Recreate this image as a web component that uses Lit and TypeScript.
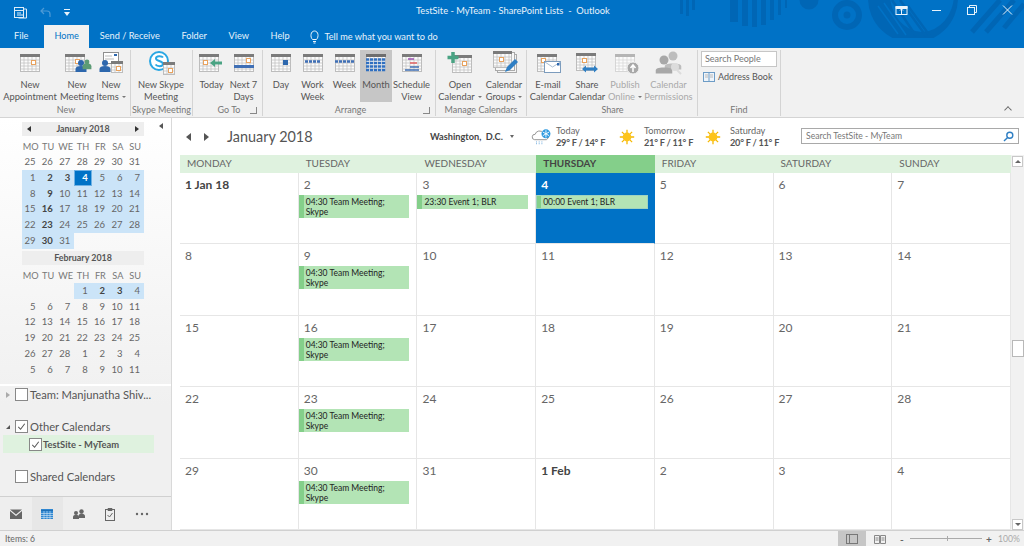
import { LitElement, html, css, svg } from "lit";
import { customElement } from "lit/decorators.js";

const F = "#fbfbfb";
const calGrid = (x: number, y: number, w = 20, h = 18, bar = "#7b7b7b", line = "#bdbdbd") => {
  const lines: any[] = [];
  for (let i = x + 4; i < x + w; i += 4) lines.push(svg`<path d="M${i} ${y + 3}V${y + h}" stroke=${line} stroke-width=".7"/>`);
  for (let j = y + 6; j < y + h; j += 3) lines.push(svg`<path d="M${x} ${j}H${x + w}" stroke=${line} stroke-width=".7"/>`);
  return svg`<rect x=${x + 0.5} y=${y + 0.5} width=${w - 1} height=${h - 1} fill=${F} stroke=${line}/>${lines}<rect x=${x} y=${y} width=${w} height="3" fill=${bar}/>`;
};
const orange = (x: number, y: number, s = 4) => svg`<rect x=${x + 0.5} y=${y + 0.5} width=${s} height=${s} fill="#fff" stroke="#e8a25e"/>`;
const person = (x: number, y: number, c: string, s = 1) => svg`<circle cx=${x} cy=${y} r=${3 * s} fill=${c}/><path d="M${x - 5.5 * s} ${y + 9 * s}v-3c0-2 2-3 ${5.5 * s}-3s${5.5 * s} 1 ${5.5 * s} 3v3z" fill=${c}/>`;
const blueRow = (x: number, y: number, w: number) => svg`<rect x=${x} y=${y} width=${w} height="3" fill="#3f6fb5"/>`;

const ICONS: Record<string, any> = {
  appt: svg`${calGrid(6, 3)}${orange(17, 9)}`,
  meeting: svg`${calGrid(4, 3)}${orange(14, 8)}${person(20, 12, "#2d67ad")}${person(26, 11, "#5c9b75", 0.8)}`,
  items: svg`<rect x="8.5" y="1.5" width="15" height="11" fill="#fff" stroke="#8f8f8f"/><path d="M10 5h7M10 8h9" stroke="#bbb"/><rect x="19" y="3" width="3" height="2" fill="#2d67ad"/>${calGrid(16, 10, 12, 12)}${orange(21, 15)}${person(10, 12, "#2d67ad")}`,
  skype: svg`<circle cx="14" cy="10" r="9" fill="#fff" stroke="#2aa7e3" stroke-width="2"/><path d="M18 6.500c-1-1.500-7-2-7 1 0 3 7 2 7 5.500 0 3-6 2.500-7.500 .5" fill="none" stroke="#2aa7e3" stroke-width="2"/>${calGrid(18, 11, 12, 13)}${orange(23, 17)}`,
  today: svg`${calGrid(3, 3)}${orange(7, 9)}<path d="M14 12l5-4v2.500h7v3h-7V16z" fill="#4aa383"/>`,
  next7: svg`${calGrid(6, 3)}${orange(18, 7)}${blueRow(6, 14, 20)}`,
  day: svg`${calGrid(6, 3)}<rect x="18" y="9" width="5" height="5" fill="#2d67ad"/>`,
  work: svg`${calGrid(6, 3)}<path d="M8 10.500h16" stroke="#3f6fb5" stroke-width="2.500" stroke-dasharray="3 1"/>`,
  week: svg`${calGrid(6, 3)}<path d="M6 10.500h20" stroke="#3f6fb5" stroke-width="2.500" stroke-dasharray="3 1"/>`,
  month: svg`${calGrid(6, 3, 20, 18, "#6e6e6e", "#c6c6c6")}<path d="M6 8.500h20M6 12h20M6 15.500h20M6 19h20" stroke="#2f6fc0" stroke-width="2.600" stroke-dasharray="3.200 .8"/>`,
  schedule: svg`${calGrid(6, 3)}<path d="M12 8h6" stroke="#9a4fb0" stroke-width="1.500"/><path d="M14 12h7" stroke="#e06060" stroke-width="1.500"/><path d="M14 16h9" stroke="#3f6fb5" stroke-width="1.500"/><path d="M9 19h14" stroke="#3f6fb5" stroke-width="1.500"/>`,
  open: svg`${calGrid(8, 4)}${orange(18, 10)}<path d="M9 1v11M3.500 6.500h11" stroke="#4aa383" stroke-width="3.500"/>`,
  groups: svg`<rect x="9.500" y="3.500" width="19" height="18" fill="#f4f4f4" stroke="#aaa"/><rect x="7.500" y="1.500" width="19" height="18" fill="#f8f8f8" stroke="#aaa"/>${calGrid(5, 0, 19, 17)}${orange(11, 6)}<path d="M17 21l2-5 8-8 3 3-8 8z" fill="#2f7fc4"/>`,
  email: svg`${calGrid(5, 3)}${orange(9, 7)}<rect x="12.500" y="10.500" width="16" height="11" fill="#fff" stroke="#7c9cbd"/><path d="M13 11l7.500 5 8-5" fill="none" stroke="#a8bdd2"/><rect x="25" y="12" width="2.500" height="2.500" fill="#2d67ad"/>`,
  share: svg`${calGrid(5, 2)}${orange(11, 7)}<path d="M8 18l4-3.500v2h8v-2l4 3.500-4 3.500v-2h-8v2z" fill="#2f7fc4" transform="translate(3 0)"/>`,
  publish: svg`${calGrid(6, 3, 20, 18, "#b5b5b5", "#d6d6d6")}<circle cx="24" cy="17" r="6" fill="#a8a8a8" stroke="#f1f1f1"/><path d="M24 21v-6M21.500 17l2.500-3 2.500 3" fill="none" stroke="#fff" stroke-width="1.500"/>`,
  perm: svg`${person(20, 5, "#bdbdbd", 1.5)}${person(11, 9, "#a8a8a8", 1.500)}<circle cx="22" cy="16" r="4" fill="#dcdcdc"/><path d="M24 19l4 4" stroke="#dcdcdc" stroke-width="2"/>`,
};

type Item = { icon: string; l: string[]; w: number; caret?: boolean; dim?: boolean; on?: boolean };
type Group = { label: string; w: number; launcher?: boolean; pad: number; items: Item[] };
const GROUPS: Group[] = [
  { label: "New", w: 131, pad: 2, items: [
    { icon: "appt", l: ["New", "Appointment"], w: 56 },
    { icon: "meeting", l: ["New", "Meeting"], w: 38 },
    { icon: "items", l: ["New", "Items"], caret: true, w: 30 },
  ] },
  { label: "Skype Meeting", w: 62, pad: 0, items: [{ icon: "skype", l: ["New Skype", "Meeting"], w: 60 }] },
  { label: "Go To", w: 70, pad: 3, launcher: true, items: [
    { icon: "today", l: ["Today"], w: 31 },
    { icon: "next7", l: ["Next 7", "Days"], w: 33 },
  ] },
  { label: "Arrange", w: 173, pad: 3, launcher: true, items: [
    { icon: "day", l: ["Day"], w: 30 },
    { icon: "work", l: ["Work", "Week"], w: 33 },
    { icon: "week", l: ["Week"], w: 31 },
    { icon: "month", l: ["Month"], w: 32, on: true },
    { icon: "schedule", l: ["Schedule", "View"], w: 39 },
  ] },
  { label: "Manage Calendars", w: 91, pad: 0, items: [
    { icon: "open", l: ["Open", "Calendar"], caret: true, w: 48 },
    { icon: "groups", l: ["Calendar", "Groups"], caret: true, w: 40 },
  ] },
  { label: "Share", w: 171, pad: 1, items: [
    { icon: "email", l: ["E-mail", "Calendar"], w: 40 },
    { icon: "share", l: ["Share", "Calendar"], w: 38 },
    { icon: "publish", l: ["Publish", "Online"], caret: true, dim: true, w: 38 },
    { icon: "perm", l: ["Calendar", "Permissions"], dim: true, w: 49 },
  ] },
];

const TABS = ["File", "Home", "Send / Receive", "Folder", "View", "Help"];
const DAYS = ["MONDAY", "TUESDAY", "WEDNESDAY", "THURSDAY", "FRIDAY", "SATURDAY", "SUNDAY"];
const CELLS = ["1 Jan 18", 2, 3, 4, 5, 6, 7, 8, 9, 10, 11, 12, 13, 14, 15, 16, 17, 18, 19, 20, 21, 22, 23, 24, 25, 26, 27, 28, 29, 30, 31, "1 Feb", 2, 3, 4];
const MEET = "04:30 Team Meeting; Skype";
const EVENTS: Record<number, { t: string; cls: string }> = {
  1: { t: MEET, cls: "two" }, 8: { t: MEET, cls: "two" }, 15: { t: MEET, cls: "two" }, 22: { t: MEET, cls: "two" }, 29: { t: MEET, cls: "two" },
  2: { t: "23:30 Event 1; BLR", cls: "one" }, 3: { t: "00:00 Event 1; BLR", cls: "one sel" },
};
const WD = ["MO", "TU", "WE", "TH", "FR", "SA", "SU"];
const JAN: any[] = [25, 26, 27, 28, 29, 30, 31, 1, 2, 3, 4, 5, 6, 7, 8, 9, 10, 11, 12, 13, 14, 15, 16, 17, 18, 19, 20, 21, 22, 23, 24, 25, 26, 27, 28, 29, 30, 31];
const FEB: any[] = ["", "", "", 1, 2, 3, 4, 5, 6, 7, 8, 9, 10, 11, 12, 13, 14, 15, 16, 17, 18, 19, 20, 21, 22, 23, 24, 25, 26, 27, 28, 1, 2, 3, 4, 5, 6, 7, 8, 9, 10, 11];
const BOLD = [2, 3, 9, 16, 23, 30];

const sun = svg`<svg class="wx" viewBox="0 0 20 20"><g stroke="#f5b800" stroke-width="1.600"><path d="M10 1v18M1 10h18M3.600 3.600l12.800 12.800M16.400 3.600L3.600 16.400"/></g><circle cx="10" cy="10" r="5.500" fill="#fdc41c"/></svg>`;
const snow = svg`<svg class="wx wide" viewBox="0 0 24 20"><path d="M5 13a3 3 0 0 1 .5-6 5 5 0 0 1 9-1.500A3.500 3.500 0 0 1 18 13z" fill="#fff" stroke="#8a8a8a"/><path d="M7 15v4M10 15v4M13 15v4" stroke="#5a9fd8" stroke-dasharray="1 1"/><circle cx="17.500" cy="6.500" r="5" fill="#2f9ae0"/><path d="M17.500 2.500v8M14 4.500l7 4M14 8.500l7-4" stroke="#fff"/></svg>`;
const check = html`<svg class="tick" viewBox="0 0 12 12"><path d="M2.500 6.500l2.500 2.500 4.500-6" fill="none" stroke="#555" stroke-width="1.100"/></svg>`;

@customElement("app-root")
export class AppRoot extends LitElement {
  static styles = css`
    :host { display: block; width: 1024px; height: 546px; overflow: hidden; font-family: Lato, "Open Sans", sans-serif; color: #444; background: #fff; position: relative; }
    svg { display: block; }
    .top { background: #0072c6; height: 48px; color: #fff; position: relative; overflow: hidden; }
    .deco { position: absolute; right: 0; top: 0; width: 384px; height: 48px; }
    .title { height: 24px; display: flex; align-items: center; position: relative; }
    .qat { display: flex; align-items: center; gap: 13px; padding-left: 14px; width: 60px; }
    .ttl { position: absolute; left: 416px; top: 4px; font-size: 9.300px; white-space: pre; line-height: 14px; color: #e8f3fb; }
    .win { position: absolute; top: 3px; right: 0; display: flex; }
    .win svg { width: 14px; height: 14px; margin: 0 10px 0 11px; }
    .tabs { height: 24px; display: flex; align-items: flex-end; font-size: 9.200px; position: relative; }
    .tab { padding: 0 10.800px; height: 23px; line-height: 22px; color: #e8f3fb; }
    .tab.first { padding: 0 16px 0 14px; }
    .tab.on { background: #f1f1f1; color: #0072c6; padding: 0 10px; height: 23px; }
    .tell { display: flex; align-items: center; gap: 4px; height: 23px; margin-left: 9px; color: #e8f3fb; }
    .tell svg { width: 11px; height: 14px; }
    .ribbon { height: 70px; background: #f1f1f1; border-bottom: 1px solid #d4d4d4; box-sizing: border-box; display: flex; position: relative; font-size: 9.300px; color: #555; }
    .grp { box-sizing: border-box; height: 66px; margin-top: 2px; border-right: 1px solid #d4d4d4; display: flex; flex-direction: column; position: relative; flex: none; }
    .items { display: flex; flex: 1; }
    .item { display: flex; flex-direction: column; align-items: center; height: 52px; flex: none; line-height: 12px; white-space: nowrap; }
    .item svg.ic { width: 32px; height: 24px; flex: none; margin-top: 1px; margin-bottom: 4px; }
    .item.on { background: #c6c6c6; }
    .item.dim { color: #a9a9a9; }
    .lbl { text-align: center; color: #777; font-size: 9px; line-height: 12px; height: 12px; white-space: nowrap; }
    .caret { display: inline-block; border: 2px solid transparent; border-top: 2.500px solid #777; border-bottom: 0; margin: 0 0 2px 3px; }
    .launch { position: absolute; right: 5px; bottom: 2px; width: 6px; height: 6px; border-right: 1px solid #888; border-bottom: 1px solid #888; }
    .find { width: 83px; padding: 1px 3px 0; }
    .sp { box-sizing: border-box; width: 76px; height: 16px; background: #fff; border: 1px solid #c6c6c6; padding-left: 3px; font-size: 9px; line-height: 13px; color: #777; }
    .ab { display: flex; align-items: center; gap: 3px; margin: 2px 0 0 2px; height: 15px; color: #555; font-size: 9px; white-space: nowrap; }
    .ab svg { width: 12px; height: 10px; }
    .collapse { position: absolute; right: 13px; bottom: 4px; width: 5px; height: 5px; border-left: 1.500px solid #666; border-top: 1.500px solid #666; transform: rotate(45deg) scale(.9); }
    .main { display: flex; height: 412px; }
    .side { width: 172px; box-sizing: border-box; flex: none; border-right: 1px solid #d9d9d9; background: linear-gradient(#fff, #f0f0f0 70%); display: flex; flex-direction: column; position: relative; }
    .sidecol { position: absolute; left: 159px; top: 5px; width: 0; height: 0; border: 3px solid transparent; border-right: 4px solid #555; border-left: 0; }
    .minis { padding: 4px 0 0 22px; width: 122px; height: 262px; flex: none; font-size: 9.500px; }
    .mh { height: 14px; background: #eeeeee; font-weight: 700; text-align: center; line-height: 14px; color: #555; display: flex; justify-content: space-between; align-items: center; padding: 0 5px; font-size: 8.900px; }
    .mh i { width: 0; height: 0; border: 3px solid transparent; }
    .mh i.l { border-right: 4px solid #333; border-left: 0; }
    .mh i.r { border-left: 4px solid #333; border-right: 0; }
    .mh i.n { border: 0; }
    .mg { display: grid; grid-template-columns: repeat(7, 17.430px); grid-template-rows: 18px; grid-auto-rows: 15.800px; color: #666; }
    .wd { text-align: center; line-height: 15px; color: #777; height: 18px; padding-top: 3px; box-sizing: border-box; font-size: 9.200px; }
    .wdrow { height: 18px; grid-column: 1 / 8; display: grid; grid-template-columns: repeat(7, 17.430px); }
    .d { text-align: right; padding-right: 4px; line-height: 15.800px; box-sizing: border-box; }
    .d.hl { background: #cbe4f8; }
    .d.b { font-weight: 700; color: #444; }
    .d.t { background: #0072c6; color: #fff; font-weight: 700; box-shadow: inset 0 0 0 1px #6fb1e4; }
    .feb { margin-top: 2px; }
    .tree { flex: 1; border-top: 2px solid #fff; font-size: 11.200px; color: #555; }
    .row { display: flex; align-items: center; height: 17px; white-space: nowrap; }
    .r2 { margin-top: 15px; }
    .r3 { margin: 0 17px 0 3px; background: #dff2df; font-size: 9.400px; font-weight: 700; padding-left: 26px; box-sizing: border-box; height: 18px; }
    .r3 .box { margin-right: 1px; }
    .r4 { margin-top: 15px; padding-left: 15px; }
    .tri { width: 15px; display: flex; justify-content: center; flex: none; }
    .tri i { width: 0; height: 0; border: 3px solid transparent; border-left: 4px solid #aaa; border-right: 0; }
    .tri i.dn { border: 0; border-bottom: 4px solid #555; border-left: 4px solid transparent; }
    .box { width: 11px; height: 11px; border: 1px solid #888; background: #fff; margin-right: 2px; flex: none; }
    .tick { width: 11px; height: 11px; }
    .nav { height: 33px; border-top: 1px solid #d0d0d0; background: #eeeeee; display: flex; flex: none; }
    .nb { width: 31.500px; display: flex; align-items: center; justify-content: center; }
    .nb svg { width: 14px; height: 14px; }
    .nb.on { background: #e7e7e7; }
    .cal { flex: 1; min-width: 0; }
    .chead { height: 37px; display: flex; align-items: center; position: relative; background: #fff; }
    .ar { width: 0; height: 0; border: 4px solid transparent; flex: none; }
    .ar.l { border-right: 5px solid #555; border-left: 0; margin-left: 14px; }
    .ar.r { border-left: 5px solid #555; border-right: 0; margin-left: 13px; }
    .month { font-size: 14.400px; color: #555; margin-left: 18px; width: 203px; white-space: nowrap; }
    .loc { font-size: 9.200px; font-weight: 700; color: #444; width: 80px; white-space: nowrap; }
    .dd { width: 0; height: 0; border: 2px solid transparent; border-top: 3px solid #666; border-bottom: 0; margin-right: 16px; }
    .wx { width: 16px; height: 16px; flex: none; margin-right: 9px; }
    .wx.wide { width: 22px; height: 18px; margin-right: 4px; }
    .wxb { display: flex; align-items: center; font-size: 9.200px; line-height: 12px; color: #666; flex: none; }
    .wxb b { font-weight: 700; color: #555; display: block; white-space: nowrap; letter-spacing: -.25px; }
    .w1 { width: 89px; }
    .w2 { width: 86px; }
    .w3 { width: 86px; }
    .search { position: absolute; left: 629px; top: 10px; width: 218px; height: 16px; box-sizing: border-box; border: 1px solid #a9a9a9; font-size: 8.600px; line-height: 14px; padding: 0 4px; color: #777; display: flex; justify-content: space-between; align-items: center; }
    .search svg { width: 11px; height: 11px; }
    .body { display: flex; height: 375px; padding-left: 8px; }
    .gridwrap { width: 831px; flex: none; }
    .dow { display: grid; grid-template-columns: repeat(7, 1fr); height: 18px; background: #dff2df; font-size: 10px; color: #666; }
    .dow div { padding-left: 7px; line-height: 16px; }
    .dow .now { background: #84cf8a; font-weight: 700; color: #444; }
    .grid { display: grid; grid-template-columns: repeat(7, 1fr); grid-template-rows: 71px repeat(4, 71.500px); }
    .cell { box-sizing: border-box; border-right: 1px solid #e6e6e6; border-bottom: 1px solid #e6e6e6; padding: 4px 0 0 0; font-size: 12px; color: #666; line-height: 16px; }
    .cell .n { padding-left: 5px; height: 18px; }
    .cell .bd { font-weight: 700; color: #444; font-size: 12px; }
    .cell.now { background: #0072c6; border-right-color: #0072c6; color: #fff; }
    .cell.now .n { font-weight: 700; }
    .ev { box-sizing: border-box; margin-right: 7px; background: #b3e4b5; border-left: 5px solid #84cf8a; font-size: 8.500px; line-height: 10px; color: #222; padding: 2px 2px 1px 2px; }
    .ev.two { height: 23px; }
    .ev.one { height: 14px; white-space: nowrap; }
    .ev.sel { outline: 1px solid #9fd3c0; outline-offset: -1px; margin-right: 6px; }
    .sb { flex: 1; background: #f1f1f1; display: flex; flex-direction: column; align-items: center; padding-top: 1px; box-sizing: border-box; }
    .sbb { width: 11px; height: 11px; box-sizing: border-box; background: #fff; border: 1px solid #c8c8c8; display: flex; align-items: center; justify-content: center; flex: none; }
    .sbb i { width: 0; height: 0; border: 3px solid transparent; border-top: 0; border-bottom: 3px solid #666; }
    .sbb i.down { border-bottom: 0; border-top: 3px solid #666; }
    .thumb { width: 12px; height: 17px; background: #fff; border: 1px solid #b8b8b8; box-sizing: border-box; margin-top: 173px; flex: none; }
    .sbsp { flex: 1; }
    .status { height: 16px; background: #f1f1f1; border-top: 1px solid #d0d0d0; box-sizing: border-box; display: flex; align-items: center; font-size: 8.600px; color: #666; position: relative; }
    .items6 { padding-left: 5px; width: 833px; flex: none; }
    .vw { width: 28px; height: 15px; display: flex; align-items: center; justify-content: center; flex: none; }
    .vw.on { background: #c6c6c6; }
    .vw svg { width: 12px; height: 10px; }
    .zoom { display: flex; align-items: center; margin-left: 6px; width: 92px; }
    .zoom i { font-style: normal; font-weight: 700; font-size: 10px; color: #666; width: 6px; line-height: 10px; }
    .zoom u { display: block; flex: 1; height: 1px; background: #aaa; margin: 0 4px; position: relative; }
    .zoom u::after { content: ""; position: absolute; left: 37px; top: -2px; width: 1px; height: 5px; background: #aaa; }
    .pct { color: #a9a9a9; margin-left: 6px; }
  `;

  private mini(list: any[], hlFrom: number, hlTo: number, today = -1) {
    return html`<div class="mg">
      <div class="wdrow">${WD.map((w) => html`<div class="wd">${w}</div>`)}</div>
      ${list.map((d, i) => {
        const hl = i >= hlFrom && i <= hlTo;
        const cls = ["d", hl ? "hl" : "", hl && BOLD.includes(d) ? "b" : "", i === today ? "t" : ""].join(" ");
        return html`<div class=${cls}>${d}</div>`;
      })}
    </div>`;
  }

  render() {
    return html`
      <div class="top">
        <svg class="deco" viewBox="640 0 384 48" fill="#0066b5">
          <defs><clipPath id="bigclip"><rect x="860" y="0" width="110" height="38"/></clipPath></defs>
          <g><rect x="680" y="0" width="3" height="14"/><rect x="686" y="0" width="3" height="16"/><rect x="692" y="0" width="3" height="10"/>
          <rect x="730" y="0" width="8" height="22"/><rect x="742" y="0" width="6" height="26"/><rect x="752" y="0" width="5" height="27"/><rect x="761" y="0" width="5" height="25"/><rect x="770" y="0" width="4" height="20"/><rect x="778" y="0" width="3" height="15"/><rect x="785" y="0" width="2" height="8"/></g>
          <circle cx="809" cy="0" r="9.500"/>
          <circle cx="847" cy="15" r="12" fill="none" stroke="#0066b5" stroke-width="6"/><circle cx="847" cy="15" r="3.500"/>
          <g clip-path="url(#bigclip)">
            <circle cx="913" cy="-2" r="45"/>
            <ellipse cx="922" cy="-6" rx="32" ry="38" fill="#0072c6"/>
            <g stroke="#0066b5" stroke-width="2.500"><path d="M892 0l24 36M900 0l26 36M908 6l22 30"/></g>
            <g stroke="#0072c6" stroke-width="1.500"><path d="M878 6l20 28M884 3l22 32"/></g>
          </g>
          <g stroke="#0066b5" stroke-width="5"><path d="M972 32l28-32M986 32l28-32M1004 28l20-24"/></g>
        </svg>
        <div class="title">
          <div class="qat">
            <svg width="13" height="13" viewBox="0 0 13 13" fill="none" stroke="#dcecf8"><rect x=".5" y="1.500" width="9" height="10"/><path d="M.5 4.500h9M3 7h4M3 9h6M10 3h2.500v9h-8"/></svg>
            <svg width="11" height="11" viewBox="0 0 11 11" fill="none" stroke="#4d9ad6" stroke-width="1.200"><path d="M4 1L1 4l3 3M1 4h6a3 3 0 0 1 3 3v3"/></svg>
            <svg width="6" height="7" viewBox="0 0 6 7" fill="#e8f3fb"><path d="M0 0h6v1H0zM0 3h6L3 7z"/></svg>
          </div>
          <div class="ttl">TestSite - MyTeam - SharePoint Lists  -  Outlook</div>
          <div class="win">
            <svg viewBox="0 0 14 14" fill="none" stroke="#e8f3fb"><rect x="1" y="3.500" width="11" height="8"/><path d="M1 3.500h11v2H1z" fill="#e8f3fb"/><path d="M6.500 11V6M5 7.500l1.500-1.500 1.500 1.500"/></svg>
            <svg viewBox="0 0 14 14" stroke="#e8f3fb"><path d="M2 7.500h9"/></svg>
            <svg viewBox="0 0 14 14" fill="none" stroke="#e8f3fb"><rect x="2.500" y="4.500" width="7" height="7"/><path d="M4.500 4.500v-2h7v7h-2"/></svg>
            <svg viewBox="0 0 14 14" stroke="#e8f3fb"><path d="M3 2.500l9 9M12 2.500l-9 9"/></svg>
          </div>
        </div>
        <div class="tabs">
          ${TABS.map((t, i) => html`<div class="tab ${i === 0 ? "first" : ""} ${t === "Home" ? "on" : ""}">${t}</div>`)}
          <div class="tell">
            <svg viewBox="0 0 11 14" fill="none" stroke="#e8f3fb"><path d="M3.500 9.500C1 7 1.500 1 5.500 1s4.500 6 2 8.500zM4 11.500h3M4.500 13h2"/></svg>
            <span>Tell me what you want to do</span>
          </div>
        </div>
      </div>

      <div class="ribbon">
        ${GROUPS.map((g) => html`
          <div class="grp" style="width:${g.w}px;padding-left:${g.pad}px">
            <div class="items">
              ${g.items.map((it) => html`
                <div class="item ${it.dim ? "dim" : ""} ${it.on ? "on" : ""}" style="width:${it.w}px">
                  <svg class="ic" viewBox="0 0 32 24">${ICONS[it.icon]}</svg>
                  ${it.l.map((s, i) => html`<div>${s}${it.caret && i === it.l.length - 1 ? html`<span class="caret"></span>` : ""}</div>`)}
                </div>`)}
            </div>
            <div class="lbl">${g.label}</div>
            ${g.launcher ? html`<span class="launch"></span>` : ""}
          </div>`)}
        <div class="grp find">
          <div class="items"><div>
            <div class="sp">Search People</div>
            <div class="ab">
              <svg viewBox="0 0 12 10"><rect x=".5" y=".5" width="11" height="9" fill="#eef4fa" stroke="#6d9cc6"/><path d="M6 .5v9" stroke="#6d9cc6"/><path d="M2 3h3M2 5h3M7 3h3M7 5h3" stroke="#b9b9b9"/></svg>
              <span>Address Book</span>
            </div>
          </div></div>
          <div class="lbl">Find</div>
        </div>
        <span class="collapse"></span>
      </div>

      <div class="main">
        <div class="side">
          <span class="sidecol"></span>
          <div class="minis">
            <div class="mh"><i class="l"></i><span>January 2018</span><i class="r"></i></div>
            ${this.mini(JAN, 7, 37, 10)}
            <div class="mh feb"><i class="n"></i><span>February 2018</span><i class="n"></i></div>
            ${this.mini(FEB, 3, 6)}
          </div>
          <div class="tree">
            <div class="row r1"><span class="tri"><i></i></span><span class="box"></span>Team: Manjunatha Shiv...</div>
            <div class="row r2"><span class="tri"><i class="dn"></i></span><span class="box">${check}</span>Other Calendars</div>
            <div class="row r3"><span class="box">${check}</span>TestSite - MyTeam</div>
            <div class="row r4"><span class="box"></span>Shared Calendars</div>
          </div>
          <div class="nav">
            <div class="nb"><svg viewBox="0 0 14 14"><path d="M1 2.500h12L7 7.500z" fill="#666"/><path d="M1 4v8h12V4L7 9z" fill="#666"/></svg></div>
            <div class="nb on"><svg viewBox="0 0 14 14"><rect x="1" y="2" width="12" height="10" fill="#2f86d0"/><path d="M1 3.500h12" stroke="#1f6fb5"/><path d="M1 6.500h12M1 8.500h12M1 10.500h12M4 4v8M7 4v8M10 4v8" stroke="#d5e8f7" stroke-width=".6"/></svg></div>
            <div class="nb"><svg viewBox="0 0 14 14" fill="#666"><circle cx="9.500" cy="4.500" r="2.200"/><path d="M6.500 11V9c0-1.500 1.500-2.500 3-2.500s3.500 1 3.500 2.500v2z"/><circle cx="4" cy="6" r="2"/><path d="M1 12v-2c0-1.500 1.500-2.200 3-2.200s3 .7 3 2.200v2z"/></svg></div>
            <div class="nb"><svg viewBox="0 0 14 14" fill="none" stroke="#666"><rect x="2.500" y="2.500" width="9" height="11"/><path d="M5 1.500h4v2H5z" fill="#666"/><path d="M4.500 8l2 2 3-4"/></svg></div>
            <div class="nb"><svg viewBox="0 0 14 14" fill="#666"><circle cx="2" cy="7" r="1.200"/><circle cx="7" cy="7" r="1.200"/><circle cx="12" cy="7" r="1.200"/></svg></div>
          </div>
        </div>
        <div class="cal">
          <div class="chead">
            <span class="ar l"></span><span class="ar r"></span>
            <span class="month">January 2018</span>
            <span class="loc">Washington,&nbsp; D.C.</span><span class="dd"></span>
            <div class="wxb w1">${snow}<div>Today<b>29° F / 14° F</b></div></div>
            <div class="wxb w2">${sun}<div>Tomorrow<b>21° F / 11° F</b></div></div>
            <div class="wxb w3">${sun}<div>Saturday<b>20° F / 11° F</b></div></div>
            <div class="search"><span>Search TestSite - MyTeam</span>
              <svg viewBox="0 0 11 11" fill="none" stroke="#2f7fc4" stroke-width="1.400"><circle cx="6.800" cy="4.200" r="3"/><path d="M4.600 6.400L1 10"/></svg></div>
          </div>
          <div class="body">
            <div class="gridwrap">
              <div class="dow">${DAYS.map((d) => html`<div class=${d === "THURSDAY" ? "now" : ""}>${d}</div>`)}</div>
              <div class="grid">
                ${CELLS.map((c, i) => {
                  const e = EVENTS[i];
                  return html`<div class="cell ${i === 3 ? "now" : ""}">
                    <div class="n ${typeof c === "string" ? "bd" : ""}">${c}</div>
                    ${e ? html`<div class="ev ${e.cls}">${e.t}</div>` : ""}
                  </div>`;
                })}
              </div>
            </div>
            <div class="sb">
              <div class="sbb"><i></i></div>
              <div class="thumb"></div>
              <div class="sbsp"></div>
              <div class="sbb"><i class="down"></i></div>
            </div>
          </div>
        </div>
      </div>

      <div class="status">
        <div class="items6">Items: 6</div>
        <div class="vw on"><svg viewBox="0 0 12 10" fill="none" stroke="#777"><rect x=".5" y=".5" width="11" height="9"/><path d="M3.500 .5v9"/></svg></div>
        <div class="vw"><svg viewBox="0 0 12 10" fill="none" stroke="#888"><path d="M.5 1.500h5v8h-5zM6.500 1.500h5v8h-5zM1.500 4h3M1.500 6h3M7.500 4h3M7.500 6h3"/></svg></div>
        <div class="zoom"><i>-</i><u></u><i>+</i></div>
        <span class="pct">100%</span>
      </div>
    `;
  }
}
